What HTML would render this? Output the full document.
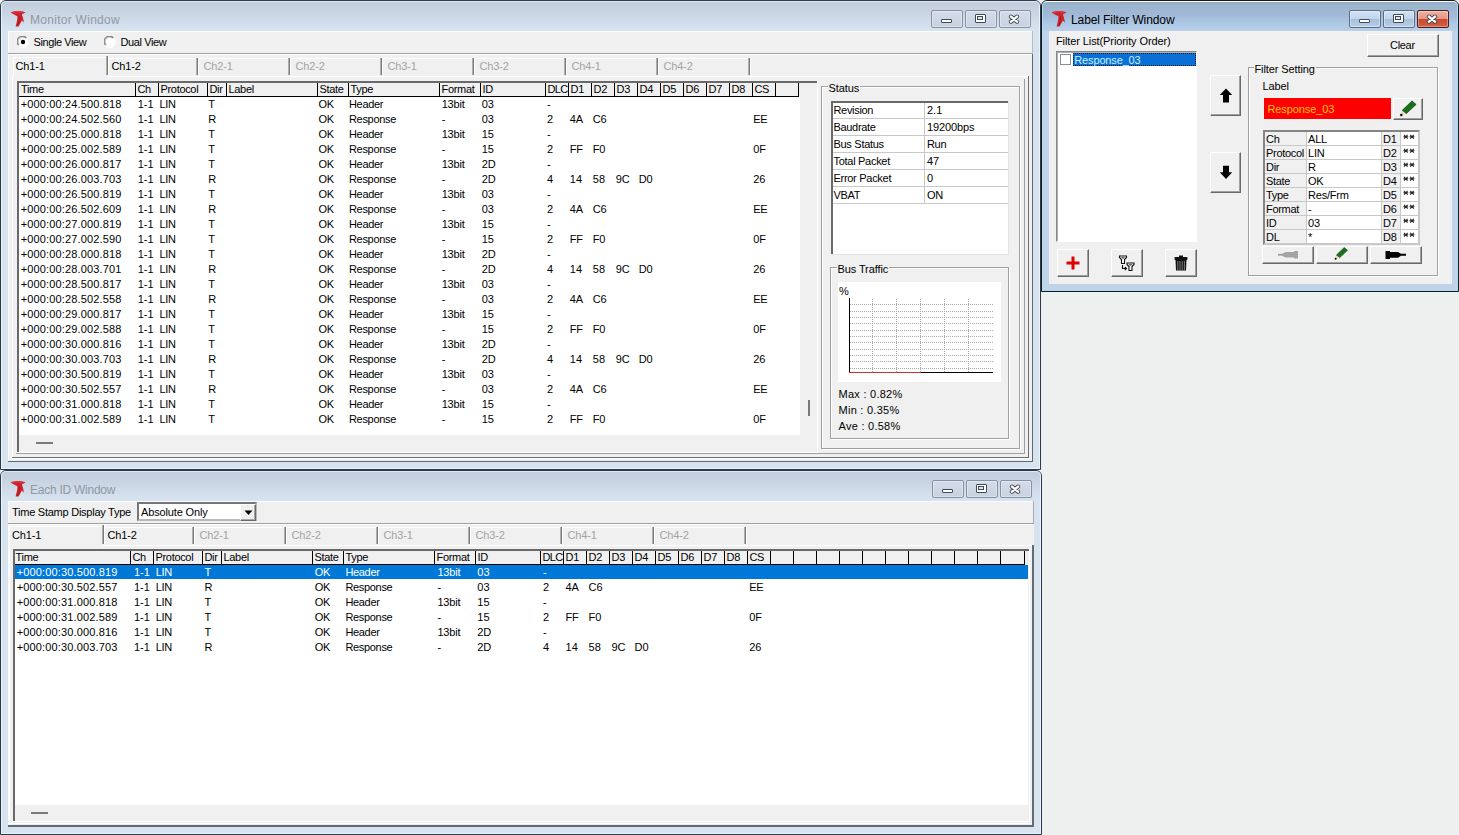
<!DOCTYPE html><html><head><meta charset="utf-8"><style>
html,body{margin:0;padding:0;width:1459px;height:835px;overflow:hidden;background:#eef0ef;font-family:"Liberation Sans",sans-serif;}
.a{position:absolute;box-sizing:content-box}
.t{position:absolute;white-space:pre;line-height:15px;font-size:11px;color:#000}
</style></head><body>
<div class="a" style="left:0px;top:0px;width:1039px;height:468px;border:1px solid #2e3947;border-radius:6px 6px 0 0;background:#d7e3ef;overflow:hidden"><div class="a" style="left:0;top:1px;width:100%;height:29px;background:linear-gradient(#c2cedc 0px,#c8d4e1 10px,#d3dfec 22px,#d8e3f0 29px)"></div><div class="a" style="left:0;top:0;width:1037px;height:466px;border:1px solid #e8f2fd;border-top-color:#dfe9f5;border-radius:5px 5px 0 0"></div></div>
<div class="a" style="left:10px;top:10px"><svg width="17" height="17" viewBox="0 0 17 17"><path d="M0.7 2.7 C2 1.6 4 0.9 6 0.9 L10.2 0.9 C12 1.1 14 1.7 15.6 2.4 C14 3.2 12.8 3.8 11.8 4.6 C12.6 6.5 13.6 9.5 13.9 12.8 C13.2 12 12.5 11.2 11.8 10.6 C11 12.2 10 14.2 8.6 16.6 L5.6 16.4 C6.6 12.6 7.6 9 7.4 6.2 C5.5 5.2 3.5 4.4 0.7 2.7 Z" fill="#cc2229"/><path d="M2.5 2.6 C5 1.8 9 1.6 13 2.4" stroke="#e8454c" stroke-width="0.9" fill="none"/><path d="M9.2 6 C10 9 9.5 12 7.5 15.5" stroke="#a8141c" stroke-width="0.8" fill="none"/></svg></div>
<div class="t" style="left:30px;top:13.0px;font-size:12px;color:#8f98a2;letter-spacing:0.28px">Monitor Window</div>
<div class="a" style="left:931px;top:10px;width:30px;height:16px;border:1px solid #8592a3;border-radius:2px;background:linear-gradient(#d3dce7,#c8d2df);box-shadow:inset 0 0 0 1px rgba(255,255,255,0.35)"></div>
<div class="a" style="left:941px;top:18.5px;width:9px;height:2.5px;border:1px solid #3f4a58;background:#fff;border-radius:1px"></div>
<div class="a" style="left:965px;top:10px;width:30px;height:16px;border:1px solid #8592a3;border-radius:2px;background:linear-gradient(#d3dce7,#c8d2df);box-shadow:inset 0 0 0 1px rgba(255,255,255,0.35)"></div>
<div class="a" style="left:975px;top:14px;width:9px;height:7px;border:1px solid #3f4a58;background:#fff;border-radius:1px"></div>
<div class="a" style="left:977px;top:16px;width:4px;height:2px;border:1px solid #3f4a58;background:#dfe6ee"></div>
<div class="a" style="left:999px;top:10px;width:30px;height:16px;border:1px solid #8592a3;border-radius:2px;background:linear-gradient(#d3dce7,#c8d2df);box-shadow:inset 0 0 0 1px rgba(255,255,255,0.35)"></div>
<svg class="a" style="left:1008px;top:14px" width="12" height="10" viewBox="0 0 12 10"><path d="M3 2.6 L9 7.6 M9 2.6 L3 7.6" stroke="#3c4550" stroke-width="4.2" stroke-linecap="round"/><path d="M3 2.6 L9 7.6 M9 2.6 L3 7.6" stroke="#fff" stroke-width="2.5" stroke-linecap="round"/></svg>
<div class="a" style="left:8px;top:31px;width:1024px;height:430px;background:#f0f0f0"></div>
<div class="a" style="left:8px;top:31px;width:1024px;height:1px;background:#fbfdff"></div>
<div class="a" style="left:8px;top:31px;width:1px;height:430px;background:#fbfbfd"></div>
<div class="a" style="left:1032px;top:31px;width:1px;height:23px;background:#b8bcc2"></div>
<div class="a" style="left:1032px;top:54px;width:1px;height:408px;background:#5d6875"></div>
<div class="a" style="left:8px;top:461px;width:1025px;height:1px;background:#5d6875"></div>
<div class="a" style="left:8px;top:53px;width:1024px;height:1px;background:#a0a0a0"></div>
<div class="a" style="left:8px;top:54px;width:1024px;height:1px;background:#ffffff"></div>
<svg class="a" style="left:16.5px;top:35.8px" width="12" height="12" viewBox="0 0 12 12"><circle cx="6" cy="6" r="4.6" fill="#fff"/><path d="M1.6 9.2 A5 5 0 0 1 9.4 1.8" stroke="#808080" stroke-width="1.1" fill="none"/><path d="M2.6 8.6 A4 4 0 0 1 8.8 2.6" stroke="#404040" stroke-width="0.7" fill="none" opacity="0.4"/><path d="M9.6 2.2 A5 5 0 0 1 2 10" stroke="#fff" stroke-width="1.1" fill="none"/><circle cx="6" cy="6" r="2.2" fill="#000"/></svg>
<div class="t" style="left:33.5px;top:34.5px;font-size:11px;letter-spacing:-0.4px">Single View</div>
<svg class="a" style="left:104px;top:35.8px" width="12" height="12" viewBox="0 0 12 12"><circle cx="6" cy="6" r="4.6" fill="#fff"/><path d="M1.6 9.2 A5 5 0 0 1 9.4 1.8" stroke="#808080" stroke-width="1.1" fill="none"/><path d="M2.6 8.6 A4 4 0 0 1 8.8 2.6" stroke="#404040" stroke-width="0.7" fill="none" opacity="0.4"/><path d="M9.6 2.2 A5 5 0 0 1 2 10" stroke="#fff" stroke-width="1.1" fill="none"/></svg>
<div class="t" style="left:120.5px;top:34.5px;font-size:11px;letter-spacing:-0.4px">Dual View</div>
<div class="a" style="left:107px;top:76px;width:921px;height:1px;background:#ffffff"></div>
<div class="a" style="left:108px;top:58px;width:641px;height:1px;background:#ffffff"></div>
<div class="a" style="left:107px;top:56px;width:1px;height:19px;background:#7a7a7a"></div>
<div class="a" style="left:108px;top:56px;width:1px;height:19px;background:#ffffff"></div>
<div class="a" style="left:106px;top:56px;width:1px;height:19px;background:#b0b0b0"></div>
<div class="a" style="left:197px;top:58px;width:1px;height:17px;background:#7a7a7a"></div>
<div class="a" style="left:198px;top:58px;width:1px;height:17px;background:#ffffff"></div>
<div class="a" style="left:196px;top:58px;width:1px;height:17px;background:#b0b0b0"></div>
<div class="a" style="left:289px;top:58px;width:1px;height:17px;background:#7a7a7a"></div>
<div class="a" style="left:290px;top:58px;width:1px;height:17px;background:#ffffff"></div>
<div class="a" style="left:288px;top:58px;width:1px;height:17px;background:#b0b0b0"></div>
<div class="a" style="left:381px;top:58px;width:1px;height:17px;background:#7a7a7a"></div>
<div class="a" style="left:382px;top:58px;width:1px;height:17px;background:#ffffff"></div>
<div class="a" style="left:380px;top:58px;width:1px;height:17px;background:#b0b0b0"></div>
<div class="a" style="left:473px;top:58px;width:1px;height:17px;background:#7a7a7a"></div>
<div class="a" style="left:474px;top:58px;width:1px;height:17px;background:#ffffff"></div>
<div class="a" style="left:472px;top:58px;width:1px;height:17px;background:#b0b0b0"></div>
<div class="a" style="left:565px;top:58px;width:1px;height:17px;background:#7a7a7a"></div>
<div class="a" style="left:566px;top:58px;width:1px;height:17px;background:#ffffff"></div>
<div class="a" style="left:564px;top:58px;width:1px;height:17px;background:#b0b0b0"></div>
<div class="a" style="left:657px;top:58px;width:1px;height:17px;background:#7a7a7a"></div>
<div class="a" style="left:658px;top:58px;width:1px;height:17px;background:#ffffff"></div>
<div class="a" style="left:656px;top:58px;width:1px;height:17px;background:#b0b0b0"></div>
<div class="a" style="left:749px;top:58px;width:1px;height:17px;background:#7a7a7a"></div>
<div class="a" style="left:750px;top:58px;width:1px;height:17px;background:#ffffff"></div>
<div class="a" style="left:748px;top:58px;width:1px;height:17px;background:#b0b0b0"></div>
<div class="a" style="left:13px;top:57px;width:1px;height:20px;background:#ffffff"></div>
<div class="a" style="left:13px;top:57px;width:93px;height:1px;background:#ffffff"></div>
<div class="t" style="left:15.5px;top:58.5px;font-size:11px;color:#000;letter-spacing:-0.13px">Ch1-1</div>
<div class="t" style="left:111.5px;top:58.5px;font-size:11px;color:#000;letter-spacing:-0.13px">Ch1-2</div>
<div class="t" style="left:203.5px;top:58.5px;font-size:11px;color:#a3a3a3;letter-spacing:-0.13px">Ch2-1</div>
<div class="t" style="left:295.5px;top:58.5px;font-size:11px;color:#a3a3a3;letter-spacing:-0.13px">Ch2-2</div>
<div class="t" style="left:387.5px;top:58.5px;font-size:11px;color:#a3a3a3;letter-spacing:-0.13px">Ch3-1</div>
<div class="t" style="left:479.5px;top:58.5px;font-size:11px;color:#a3a3a3;letter-spacing:-0.13px">Ch3-2</div>
<div class="t" style="left:571.5px;top:58.5px;font-size:11px;color:#a3a3a3;letter-spacing:-0.13px">Ch4-1</div>
<div class="t" style="left:663.5px;top:58.5px;font-size:11px;color:#a3a3a3;letter-spacing:-0.13px">Ch4-2</div>
<div class="a" style="left:12px;top:76px;width:1px;height:382px;background:#ffffff"></div>
<div class="a" style="left:1028px;top:76px;width:1px;height:382px;background:#6d6d6d"></div>
<div class="a" style="left:12px;top:457px;width:1017px;height:1px;background:#6d6d6d"></div>
<div class="a" style="left:12px;top:458px;width:1016px;height:1px;background:#ffffff"></div>
<div class="a" style="left:1024px;top:79px;width:1px;height:375px;background:#a0a0a0"></div>
<div class="a" style="left:16px;top:453px;width:1009px;height:1px;background:#a0a0a0"></div>
<div class="a" style="left:17px;top:81px;width:800px;height:371px;background:#f0f0f0"></div>
<div class="a" style="left:17px;top:81px;width:800px;height:2px;background:#696969"></div>
<div class="a" style="left:17px;top:81px;width:2px;height:371px;background:#696969"></div>
<div class="a" style="left:17px;top:452px;width:801px;height:1px;background:#ffffff"></div>
<div class="a" style="left:817px;top:81px;width:1px;height:372px;background:#ffffff"></div>
<div class="a" style="left:19px;top:83px;width:779px;height:13px;background:#f0f0f0"></div>
<div class="a" style="left:19px;top:96px;width:780px;height:1px;background:#000000"></div>
<div class="a" style="left:135px;top:83px;width:1px;height:14px;background:#000000"></div>
<div class="a" style="left:158px;top:83px;width:1px;height:14px;background:#000000"></div>
<div class="a" style="left:207px;top:83px;width:1px;height:14px;background:#000000"></div>
<div class="a" style="left:226px;top:83px;width:1px;height:14px;background:#000000"></div>
<div class="a" style="left:317px;top:83px;width:1px;height:14px;background:#000000"></div>
<div class="a" style="left:348px;top:83px;width:1px;height:14px;background:#000000"></div>
<div class="a" style="left:439px;top:83px;width:1px;height:14px;background:#000000"></div>
<div class="a" style="left:480px;top:83px;width:1px;height:14px;background:#000000"></div>
<div class="a" style="left:545px;top:83px;width:1px;height:14px;background:#000000"></div>
<div class="a" style="left:568px;top:83px;width:1px;height:14px;background:#000000"></div>
<div class="a" style="left:591px;top:83px;width:1px;height:14px;background:#000000"></div>
<div class="a" style="left:614px;top:83px;width:1px;height:14px;background:#000000"></div>
<div class="a" style="left:637px;top:83px;width:1px;height:14px;background:#000000"></div>
<div class="a" style="left:660px;top:83px;width:1px;height:14px;background:#000000"></div>
<div class="a" style="left:683px;top:83px;width:1px;height:14px;background:#000000"></div>
<div class="a" style="left:706px;top:83px;width:1px;height:14px;background:#000000"></div>
<div class="a" style="left:729px;top:83px;width:1px;height:14px;background:#000000"></div>
<div class="a" style="left:752px;top:83px;width:1px;height:14px;background:#000000"></div>
<div class="a" style="left:775px;top:83px;width:1px;height:14px;background:#000000"></div>
<div class="a" style="left:798px;top:83px;width:1px;height:14px;background:#000000"></div>
<div class="t" style="left:21px;top:81.5px;font-size:11px;;letter-spacing:-0.32px">Time</div>
<div class="t" style="left:137.5px;top:81.5px;font-size:11px;;letter-spacing:-0.32px">Ch</div>
<div class="t" style="left:160.5px;top:81.5px;font-size:11px;;letter-spacing:-0.32px">Protocol</div>
<div class="t" style="left:209.5px;top:81.5px;font-size:11px;;letter-spacing:-0.32px">Dir</div>
<div class="t" style="left:228.5px;top:81.5px;font-size:11px;;letter-spacing:-0.32px">Label</div>
<div class="t" style="left:319.5px;top:81.5px;font-size:11px;;letter-spacing:-0.32px">State</div>
<div class="t" style="left:350.5px;top:81.5px;font-size:11px;;letter-spacing:-0.32px">Type</div>
<div class="t" style="left:441.5px;top:81.5px;font-size:11px;;letter-spacing:-0.32px">Format</div>
<div class="t" style="left:482.5px;top:81.5px;font-size:11px;;letter-spacing:-0.32px">ID</div>
<div class="t" style="left:547.5px;top:81.5px;font-size:11px;letter-spacing:-0.6px">DLC</div>
<div class="t" style="left:570.5px;top:81.5px;font-size:11px;;letter-spacing:-0.16px">D1</div>
<div class="t" style="left:593.5px;top:81.5px;font-size:11px;;letter-spacing:-0.16px">D2</div>
<div class="t" style="left:616.5px;top:81.5px;font-size:11px;;letter-spacing:-0.16px">D3</div>
<div class="t" style="left:639.5px;top:81.5px;font-size:11px;;letter-spacing:-0.16px">D4</div>
<div class="t" style="left:662.5px;top:81.5px;font-size:11px;;letter-spacing:-0.16px">D5</div>
<div class="t" style="left:685.5px;top:81.5px;font-size:11px;;letter-spacing:-0.16px">D6</div>
<div class="t" style="left:708.5px;top:81.5px;font-size:11px;;letter-spacing:-0.16px">D7</div>
<div class="t" style="left:731.5px;top:81.5px;font-size:11px;;letter-spacing:-0.16px">D8</div>
<div class="t" style="left:754.5px;top:81.5px;font-size:11px;;letter-spacing:-0.32px">CS</div>
<div class="t" style="left:777.5px;top:81.5px;font-size:11px;"></div>
<div class="a" style="left:19px;top:97px;width:781px;height:338px;background:#ffffff"></div>
<div class="a" style="left:808px;top:400px;width:2px;height:16px;background:#7a7a7a"></div>
<div class="a" style="left:36px;top:442px;width:17px;height:2px;background:#7a7a7a"></div>
<div class="t" style="left:20.7px;top:96.5px;font-size:11px;color:#000;letter-spacing:0.15px">+000:00:24.500.818</div>
<div class="t" style="left:137.7px;top:96.5px;font-size:11px;color:#000">1-1</div>
<div class="t" style="left:159.4px;top:96.5px;font-size:11px;color:#000;letter-spacing:-0.32px">LIN</div>
<div class="t" style="left:208.2px;top:96.5px;font-size:11px;color:#000;letter-spacing:-0.32px">T</div>
<div class="t" style="left:318.6px;top:96.5px;font-size:11px;color:#000;letter-spacing:-0.32px">OK</div>
<div class="t" style="left:349.0px;top:96.5px;font-size:11px;color:#000;letter-spacing:-0.32px">Header</div>
<div class="t" style="left:441.7px;top:96.5px;font-size:11px;color:#000;letter-spacing:-0.19px">13bit</div>
<div class="t" style="left:481.7px;top:96.5px;font-size:11px;color:#000">03</div>
<div class="t" style="left:547.0px;top:96.5px;font-size:11px;color:#000">-</div>
<div class="t" style="left:20.7px;top:111.5px;font-size:11px;color:#000;letter-spacing:0.15px">+000:00:24.502.560</div>
<div class="t" style="left:137.7px;top:111.5px;font-size:11px;color:#000">1-1</div>
<div class="t" style="left:159.4px;top:111.5px;font-size:11px;color:#000;letter-spacing:-0.32px">LIN</div>
<div class="t" style="left:208.2px;top:111.5px;font-size:11px;color:#000;letter-spacing:-0.32px">R</div>
<div class="t" style="left:318.6px;top:111.5px;font-size:11px;color:#000;letter-spacing:-0.32px">OK</div>
<div class="t" style="left:349.0px;top:111.5px;font-size:11px;color:#000;letter-spacing:-0.32px">Response</div>
<div class="t" style="left:441.7px;top:111.5px;font-size:11px;color:#000">-</div>
<div class="t" style="left:481.7px;top:111.5px;font-size:11px;color:#000">03</div>
<div class="t" style="left:547.0px;top:111.5px;font-size:11px;color:#000">2</div>
<div class="t" style="left:569.8px;top:111.5px;font-size:11px;color:#000;letter-spacing:-0.16px">4A</div>
<div class="t" style="left:592.8px;top:111.5px;font-size:11px;color:#000;letter-spacing:-0.16px">C6</div>
<div class="t" style="left:753.2px;top:111.5px;font-size:11px;color:#000;letter-spacing:-0.32px">EE</div>
<div class="t" style="left:20.7px;top:126.5px;font-size:11px;color:#000;letter-spacing:0.15px">+000:00:25.000.818</div>
<div class="t" style="left:137.7px;top:126.5px;font-size:11px;color:#000">1-1</div>
<div class="t" style="left:159.4px;top:126.5px;font-size:11px;color:#000;letter-spacing:-0.32px">LIN</div>
<div class="t" style="left:208.2px;top:126.5px;font-size:11px;color:#000;letter-spacing:-0.32px">T</div>
<div class="t" style="left:318.6px;top:126.5px;font-size:11px;color:#000;letter-spacing:-0.32px">OK</div>
<div class="t" style="left:349.0px;top:126.5px;font-size:11px;color:#000;letter-spacing:-0.32px">Header</div>
<div class="t" style="left:441.7px;top:126.5px;font-size:11px;color:#000;letter-spacing:-0.19px">13bit</div>
<div class="t" style="left:481.7px;top:126.5px;font-size:11px;color:#000">15</div>
<div class="t" style="left:547.0px;top:126.5px;font-size:11px;color:#000">-</div>
<div class="t" style="left:20.7px;top:141.5px;font-size:11px;color:#000;letter-spacing:0.15px">+000:00:25.002.589</div>
<div class="t" style="left:137.7px;top:141.5px;font-size:11px;color:#000">1-1</div>
<div class="t" style="left:159.4px;top:141.5px;font-size:11px;color:#000;letter-spacing:-0.32px">LIN</div>
<div class="t" style="left:208.2px;top:141.5px;font-size:11px;color:#000;letter-spacing:-0.32px">T</div>
<div class="t" style="left:318.6px;top:141.5px;font-size:11px;color:#000;letter-spacing:-0.32px">OK</div>
<div class="t" style="left:349.0px;top:141.5px;font-size:11px;color:#000;letter-spacing:-0.32px">Response</div>
<div class="t" style="left:441.7px;top:141.5px;font-size:11px;color:#000">-</div>
<div class="t" style="left:481.7px;top:141.5px;font-size:11px;color:#000">15</div>
<div class="t" style="left:547.0px;top:141.5px;font-size:11px;color:#000">2</div>
<div class="t" style="left:569.8px;top:141.5px;font-size:11px;color:#000;letter-spacing:-0.32px">FF</div>
<div class="t" style="left:592.8px;top:141.5px;font-size:11px;color:#000;letter-spacing:-0.16px">F0</div>
<div class="t" style="left:753.2px;top:141.5px;font-size:11px;color:#000;letter-spacing:-0.16px">0F</div>
<div class="t" style="left:20.7px;top:156.5px;font-size:11px;color:#000;letter-spacing:0.15px">+000:00:26.000.817</div>
<div class="t" style="left:137.7px;top:156.5px;font-size:11px;color:#000">1-1</div>
<div class="t" style="left:159.4px;top:156.5px;font-size:11px;color:#000;letter-spacing:-0.32px">LIN</div>
<div class="t" style="left:208.2px;top:156.5px;font-size:11px;color:#000;letter-spacing:-0.32px">T</div>
<div class="t" style="left:318.6px;top:156.5px;font-size:11px;color:#000;letter-spacing:-0.32px">OK</div>
<div class="t" style="left:349.0px;top:156.5px;font-size:11px;color:#000;letter-spacing:-0.32px">Header</div>
<div class="t" style="left:441.7px;top:156.5px;font-size:11px;color:#000;letter-spacing:-0.19px">13bit</div>
<div class="t" style="left:481.7px;top:156.5px;font-size:11px;color:#000;letter-spacing:-0.16px">2D</div>
<div class="t" style="left:547.0px;top:156.5px;font-size:11px;color:#000">-</div>
<div class="t" style="left:20.7px;top:171.5px;font-size:11px;color:#000;letter-spacing:0.15px">+000:00:26.003.703</div>
<div class="t" style="left:137.7px;top:171.5px;font-size:11px;color:#000">1-1</div>
<div class="t" style="left:159.4px;top:171.5px;font-size:11px;color:#000;letter-spacing:-0.32px">LIN</div>
<div class="t" style="left:208.2px;top:171.5px;font-size:11px;color:#000;letter-spacing:-0.32px">R</div>
<div class="t" style="left:318.6px;top:171.5px;font-size:11px;color:#000;letter-spacing:-0.32px">OK</div>
<div class="t" style="left:349.0px;top:171.5px;font-size:11px;color:#000;letter-spacing:-0.32px">Response</div>
<div class="t" style="left:441.7px;top:171.5px;font-size:11px;color:#000">-</div>
<div class="t" style="left:481.7px;top:171.5px;font-size:11px;color:#000;letter-spacing:-0.16px">2D</div>
<div class="t" style="left:547.0px;top:171.5px;font-size:11px;color:#000">4</div>
<div class="t" style="left:569.8px;top:171.5px;font-size:11px;color:#000">14</div>
<div class="t" style="left:592.8px;top:171.5px;font-size:11px;color:#000">58</div>
<div class="t" style="left:615.8px;top:171.5px;font-size:11px;color:#000;letter-spacing:-0.16px">9C</div>
<div class="t" style="left:638.8px;top:171.5px;font-size:11px;color:#000;letter-spacing:-0.16px">D0</div>
<div class="t" style="left:753.2px;top:171.5px;font-size:11px;color:#000">26</div>
<div class="t" style="left:20.7px;top:186.5px;font-size:11px;color:#000;letter-spacing:0.15px">+000:00:26.500.819</div>
<div class="t" style="left:137.7px;top:186.5px;font-size:11px;color:#000">1-1</div>
<div class="t" style="left:159.4px;top:186.5px;font-size:11px;color:#000;letter-spacing:-0.32px">LIN</div>
<div class="t" style="left:208.2px;top:186.5px;font-size:11px;color:#000;letter-spacing:-0.32px">T</div>
<div class="t" style="left:318.6px;top:186.5px;font-size:11px;color:#000;letter-spacing:-0.32px">OK</div>
<div class="t" style="left:349.0px;top:186.5px;font-size:11px;color:#000;letter-spacing:-0.32px">Header</div>
<div class="t" style="left:441.7px;top:186.5px;font-size:11px;color:#000;letter-spacing:-0.19px">13bit</div>
<div class="t" style="left:481.7px;top:186.5px;font-size:11px;color:#000">03</div>
<div class="t" style="left:547.0px;top:186.5px;font-size:11px;color:#000">-</div>
<div class="t" style="left:20.7px;top:201.5px;font-size:11px;color:#000;letter-spacing:0.15px">+000:00:26.502.609</div>
<div class="t" style="left:137.7px;top:201.5px;font-size:11px;color:#000">1-1</div>
<div class="t" style="left:159.4px;top:201.5px;font-size:11px;color:#000;letter-spacing:-0.32px">LIN</div>
<div class="t" style="left:208.2px;top:201.5px;font-size:11px;color:#000;letter-spacing:-0.32px">R</div>
<div class="t" style="left:318.6px;top:201.5px;font-size:11px;color:#000;letter-spacing:-0.32px">OK</div>
<div class="t" style="left:349.0px;top:201.5px;font-size:11px;color:#000;letter-spacing:-0.32px">Response</div>
<div class="t" style="left:441.7px;top:201.5px;font-size:11px;color:#000">-</div>
<div class="t" style="left:481.7px;top:201.5px;font-size:11px;color:#000">03</div>
<div class="t" style="left:547.0px;top:201.5px;font-size:11px;color:#000">2</div>
<div class="t" style="left:569.8px;top:201.5px;font-size:11px;color:#000;letter-spacing:-0.16px">4A</div>
<div class="t" style="left:592.8px;top:201.5px;font-size:11px;color:#000;letter-spacing:-0.16px">C6</div>
<div class="t" style="left:753.2px;top:201.5px;font-size:11px;color:#000;letter-spacing:-0.32px">EE</div>
<div class="t" style="left:20.7px;top:216.5px;font-size:11px;color:#000;letter-spacing:0.15px">+000:00:27.000.819</div>
<div class="t" style="left:137.7px;top:216.5px;font-size:11px;color:#000">1-1</div>
<div class="t" style="left:159.4px;top:216.5px;font-size:11px;color:#000;letter-spacing:-0.32px">LIN</div>
<div class="t" style="left:208.2px;top:216.5px;font-size:11px;color:#000;letter-spacing:-0.32px">T</div>
<div class="t" style="left:318.6px;top:216.5px;font-size:11px;color:#000;letter-spacing:-0.32px">OK</div>
<div class="t" style="left:349.0px;top:216.5px;font-size:11px;color:#000;letter-spacing:-0.32px">Header</div>
<div class="t" style="left:441.7px;top:216.5px;font-size:11px;color:#000;letter-spacing:-0.19px">13bit</div>
<div class="t" style="left:481.7px;top:216.5px;font-size:11px;color:#000">15</div>
<div class="t" style="left:547.0px;top:216.5px;font-size:11px;color:#000">-</div>
<div class="t" style="left:20.7px;top:231.5px;font-size:11px;color:#000;letter-spacing:0.15px">+000:00:27.002.590</div>
<div class="t" style="left:137.7px;top:231.5px;font-size:11px;color:#000">1-1</div>
<div class="t" style="left:159.4px;top:231.5px;font-size:11px;color:#000;letter-spacing:-0.32px">LIN</div>
<div class="t" style="left:208.2px;top:231.5px;font-size:11px;color:#000;letter-spacing:-0.32px">T</div>
<div class="t" style="left:318.6px;top:231.5px;font-size:11px;color:#000;letter-spacing:-0.32px">OK</div>
<div class="t" style="left:349.0px;top:231.5px;font-size:11px;color:#000;letter-spacing:-0.32px">Response</div>
<div class="t" style="left:441.7px;top:231.5px;font-size:11px;color:#000">-</div>
<div class="t" style="left:481.7px;top:231.5px;font-size:11px;color:#000">15</div>
<div class="t" style="left:547.0px;top:231.5px;font-size:11px;color:#000">2</div>
<div class="t" style="left:569.8px;top:231.5px;font-size:11px;color:#000;letter-spacing:-0.32px">FF</div>
<div class="t" style="left:592.8px;top:231.5px;font-size:11px;color:#000;letter-spacing:-0.16px">F0</div>
<div class="t" style="left:753.2px;top:231.5px;font-size:11px;color:#000;letter-spacing:-0.16px">0F</div>
<div class="t" style="left:20.7px;top:246.5px;font-size:11px;color:#000;letter-spacing:0.15px">+000:00:28.000.818</div>
<div class="t" style="left:137.7px;top:246.5px;font-size:11px;color:#000">1-1</div>
<div class="t" style="left:159.4px;top:246.5px;font-size:11px;color:#000;letter-spacing:-0.32px">LIN</div>
<div class="t" style="left:208.2px;top:246.5px;font-size:11px;color:#000;letter-spacing:-0.32px">T</div>
<div class="t" style="left:318.6px;top:246.5px;font-size:11px;color:#000;letter-spacing:-0.32px">OK</div>
<div class="t" style="left:349.0px;top:246.5px;font-size:11px;color:#000;letter-spacing:-0.32px">Header</div>
<div class="t" style="left:441.7px;top:246.5px;font-size:11px;color:#000;letter-spacing:-0.19px">13bit</div>
<div class="t" style="left:481.7px;top:246.5px;font-size:11px;color:#000;letter-spacing:-0.16px">2D</div>
<div class="t" style="left:547.0px;top:246.5px;font-size:11px;color:#000">-</div>
<div class="t" style="left:20.7px;top:261.5px;font-size:11px;color:#000;letter-spacing:0.15px">+000:00:28.003.701</div>
<div class="t" style="left:137.7px;top:261.5px;font-size:11px;color:#000">1-1</div>
<div class="t" style="left:159.4px;top:261.5px;font-size:11px;color:#000;letter-spacing:-0.32px">LIN</div>
<div class="t" style="left:208.2px;top:261.5px;font-size:11px;color:#000;letter-spacing:-0.32px">R</div>
<div class="t" style="left:318.6px;top:261.5px;font-size:11px;color:#000;letter-spacing:-0.32px">OK</div>
<div class="t" style="left:349.0px;top:261.5px;font-size:11px;color:#000;letter-spacing:-0.32px">Response</div>
<div class="t" style="left:441.7px;top:261.5px;font-size:11px;color:#000">-</div>
<div class="t" style="left:481.7px;top:261.5px;font-size:11px;color:#000;letter-spacing:-0.16px">2D</div>
<div class="t" style="left:547.0px;top:261.5px;font-size:11px;color:#000">4</div>
<div class="t" style="left:569.8px;top:261.5px;font-size:11px;color:#000">14</div>
<div class="t" style="left:592.8px;top:261.5px;font-size:11px;color:#000">58</div>
<div class="t" style="left:615.8px;top:261.5px;font-size:11px;color:#000;letter-spacing:-0.16px">9C</div>
<div class="t" style="left:638.8px;top:261.5px;font-size:11px;color:#000;letter-spacing:-0.16px">D0</div>
<div class="t" style="left:753.2px;top:261.5px;font-size:11px;color:#000">26</div>
<div class="t" style="left:20.7px;top:276.5px;font-size:11px;color:#000;letter-spacing:0.15px">+000:00:28.500.817</div>
<div class="t" style="left:137.7px;top:276.5px;font-size:11px;color:#000">1-1</div>
<div class="t" style="left:159.4px;top:276.5px;font-size:11px;color:#000;letter-spacing:-0.32px">LIN</div>
<div class="t" style="left:208.2px;top:276.5px;font-size:11px;color:#000;letter-spacing:-0.32px">T</div>
<div class="t" style="left:318.6px;top:276.5px;font-size:11px;color:#000;letter-spacing:-0.32px">OK</div>
<div class="t" style="left:349.0px;top:276.5px;font-size:11px;color:#000;letter-spacing:-0.32px">Header</div>
<div class="t" style="left:441.7px;top:276.5px;font-size:11px;color:#000;letter-spacing:-0.19px">13bit</div>
<div class="t" style="left:481.7px;top:276.5px;font-size:11px;color:#000">03</div>
<div class="t" style="left:547.0px;top:276.5px;font-size:11px;color:#000">-</div>
<div class="t" style="left:20.7px;top:291.5px;font-size:11px;color:#000;letter-spacing:0.15px">+000:00:28.502.558</div>
<div class="t" style="left:137.7px;top:291.5px;font-size:11px;color:#000">1-1</div>
<div class="t" style="left:159.4px;top:291.5px;font-size:11px;color:#000;letter-spacing:-0.32px">LIN</div>
<div class="t" style="left:208.2px;top:291.5px;font-size:11px;color:#000;letter-spacing:-0.32px">R</div>
<div class="t" style="left:318.6px;top:291.5px;font-size:11px;color:#000;letter-spacing:-0.32px">OK</div>
<div class="t" style="left:349.0px;top:291.5px;font-size:11px;color:#000;letter-spacing:-0.32px">Response</div>
<div class="t" style="left:441.7px;top:291.5px;font-size:11px;color:#000">-</div>
<div class="t" style="left:481.7px;top:291.5px;font-size:11px;color:#000">03</div>
<div class="t" style="left:547.0px;top:291.5px;font-size:11px;color:#000">2</div>
<div class="t" style="left:569.8px;top:291.5px;font-size:11px;color:#000;letter-spacing:-0.16px">4A</div>
<div class="t" style="left:592.8px;top:291.5px;font-size:11px;color:#000;letter-spacing:-0.16px">C6</div>
<div class="t" style="left:753.2px;top:291.5px;font-size:11px;color:#000;letter-spacing:-0.32px">EE</div>
<div class="t" style="left:20.7px;top:306.5px;font-size:11px;color:#000;letter-spacing:0.15px">+000:00:29.000.817</div>
<div class="t" style="left:137.7px;top:306.5px;font-size:11px;color:#000">1-1</div>
<div class="t" style="left:159.4px;top:306.5px;font-size:11px;color:#000;letter-spacing:-0.32px">LIN</div>
<div class="t" style="left:208.2px;top:306.5px;font-size:11px;color:#000;letter-spacing:-0.32px">T</div>
<div class="t" style="left:318.6px;top:306.5px;font-size:11px;color:#000;letter-spacing:-0.32px">OK</div>
<div class="t" style="left:349.0px;top:306.5px;font-size:11px;color:#000;letter-spacing:-0.32px">Header</div>
<div class="t" style="left:441.7px;top:306.5px;font-size:11px;color:#000;letter-spacing:-0.19px">13bit</div>
<div class="t" style="left:481.7px;top:306.5px;font-size:11px;color:#000">15</div>
<div class="t" style="left:547.0px;top:306.5px;font-size:11px;color:#000">-</div>
<div class="t" style="left:20.7px;top:321.5px;font-size:11px;color:#000;letter-spacing:0.15px">+000:00:29.002.588</div>
<div class="t" style="left:137.7px;top:321.5px;font-size:11px;color:#000">1-1</div>
<div class="t" style="left:159.4px;top:321.5px;font-size:11px;color:#000;letter-spacing:-0.32px">LIN</div>
<div class="t" style="left:208.2px;top:321.5px;font-size:11px;color:#000;letter-spacing:-0.32px">T</div>
<div class="t" style="left:318.6px;top:321.5px;font-size:11px;color:#000;letter-spacing:-0.32px">OK</div>
<div class="t" style="left:349.0px;top:321.5px;font-size:11px;color:#000;letter-spacing:-0.32px">Response</div>
<div class="t" style="left:441.7px;top:321.5px;font-size:11px;color:#000">-</div>
<div class="t" style="left:481.7px;top:321.5px;font-size:11px;color:#000">15</div>
<div class="t" style="left:547.0px;top:321.5px;font-size:11px;color:#000">2</div>
<div class="t" style="left:569.8px;top:321.5px;font-size:11px;color:#000;letter-spacing:-0.32px">FF</div>
<div class="t" style="left:592.8px;top:321.5px;font-size:11px;color:#000;letter-spacing:-0.16px">F0</div>
<div class="t" style="left:753.2px;top:321.5px;font-size:11px;color:#000;letter-spacing:-0.16px">0F</div>
<div class="t" style="left:20.7px;top:336.5px;font-size:11px;color:#000;letter-spacing:0.15px">+000:00:30.000.816</div>
<div class="t" style="left:137.7px;top:336.5px;font-size:11px;color:#000">1-1</div>
<div class="t" style="left:159.4px;top:336.5px;font-size:11px;color:#000;letter-spacing:-0.32px">LIN</div>
<div class="t" style="left:208.2px;top:336.5px;font-size:11px;color:#000;letter-spacing:-0.32px">T</div>
<div class="t" style="left:318.6px;top:336.5px;font-size:11px;color:#000;letter-spacing:-0.32px">OK</div>
<div class="t" style="left:349.0px;top:336.5px;font-size:11px;color:#000;letter-spacing:-0.32px">Header</div>
<div class="t" style="left:441.7px;top:336.5px;font-size:11px;color:#000;letter-spacing:-0.19px">13bit</div>
<div class="t" style="left:481.7px;top:336.5px;font-size:11px;color:#000;letter-spacing:-0.16px">2D</div>
<div class="t" style="left:547.0px;top:336.5px;font-size:11px;color:#000">-</div>
<div class="t" style="left:20.7px;top:351.5px;font-size:11px;color:#000;letter-spacing:0.15px">+000:00:30.003.703</div>
<div class="t" style="left:137.7px;top:351.5px;font-size:11px;color:#000">1-1</div>
<div class="t" style="left:159.4px;top:351.5px;font-size:11px;color:#000;letter-spacing:-0.32px">LIN</div>
<div class="t" style="left:208.2px;top:351.5px;font-size:11px;color:#000;letter-spacing:-0.32px">R</div>
<div class="t" style="left:318.6px;top:351.5px;font-size:11px;color:#000;letter-spacing:-0.32px">OK</div>
<div class="t" style="left:349.0px;top:351.5px;font-size:11px;color:#000;letter-spacing:-0.32px">Response</div>
<div class="t" style="left:441.7px;top:351.5px;font-size:11px;color:#000">-</div>
<div class="t" style="left:481.7px;top:351.5px;font-size:11px;color:#000;letter-spacing:-0.16px">2D</div>
<div class="t" style="left:547.0px;top:351.5px;font-size:11px;color:#000">4</div>
<div class="t" style="left:569.8px;top:351.5px;font-size:11px;color:#000">14</div>
<div class="t" style="left:592.8px;top:351.5px;font-size:11px;color:#000">58</div>
<div class="t" style="left:615.8px;top:351.5px;font-size:11px;color:#000;letter-spacing:-0.16px">9C</div>
<div class="t" style="left:638.8px;top:351.5px;font-size:11px;color:#000;letter-spacing:-0.16px">D0</div>
<div class="t" style="left:753.2px;top:351.5px;font-size:11px;color:#000">26</div>
<div class="t" style="left:20.7px;top:366.5px;font-size:11px;color:#000;letter-spacing:0.15px">+000:00:30.500.819</div>
<div class="t" style="left:137.7px;top:366.5px;font-size:11px;color:#000">1-1</div>
<div class="t" style="left:159.4px;top:366.5px;font-size:11px;color:#000;letter-spacing:-0.32px">LIN</div>
<div class="t" style="left:208.2px;top:366.5px;font-size:11px;color:#000;letter-spacing:-0.32px">T</div>
<div class="t" style="left:318.6px;top:366.5px;font-size:11px;color:#000;letter-spacing:-0.32px">OK</div>
<div class="t" style="left:349.0px;top:366.5px;font-size:11px;color:#000;letter-spacing:-0.32px">Header</div>
<div class="t" style="left:441.7px;top:366.5px;font-size:11px;color:#000;letter-spacing:-0.19px">13bit</div>
<div class="t" style="left:481.7px;top:366.5px;font-size:11px;color:#000">03</div>
<div class="t" style="left:547.0px;top:366.5px;font-size:11px;color:#000">-</div>
<div class="t" style="left:20.7px;top:381.5px;font-size:11px;color:#000;letter-spacing:0.15px">+000:00:30.502.557</div>
<div class="t" style="left:137.7px;top:381.5px;font-size:11px;color:#000">1-1</div>
<div class="t" style="left:159.4px;top:381.5px;font-size:11px;color:#000;letter-spacing:-0.32px">LIN</div>
<div class="t" style="left:208.2px;top:381.5px;font-size:11px;color:#000;letter-spacing:-0.32px">R</div>
<div class="t" style="left:318.6px;top:381.5px;font-size:11px;color:#000;letter-spacing:-0.32px">OK</div>
<div class="t" style="left:349.0px;top:381.5px;font-size:11px;color:#000;letter-spacing:-0.32px">Response</div>
<div class="t" style="left:441.7px;top:381.5px;font-size:11px;color:#000">-</div>
<div class="t" style="left:481.7px;top:381.5px;font-size:11px;color:#000">03</div>
<div class="t" style="left:547.0px;top:381.5px;font-size:11px;color:#000">2</div>
<div class="t" style="left:569.8px;top:381.5px;font-size:11px;color:#000;letter-spacing:-0.16px">4A</div>
<div class="t" style="left:592.8px;top:381.5px;font-size:11px;color:#000;letter-spacing:-0.16px">C6</div>
<div class="t" style="left:753.2px;top:381.5px;font-size:11px;color:#000;letter-spacing:-0.32px">EE</div>
<div class="t" style="left:20.7px;top:396.5px;font-size:11px;color:#000;letter-spacing:0.15px">+000:00:31.000.818</div>
<div class="t" style="left:137.7px;top:396.5px;font-size:11px;color:#000">1-1</div>
<div class="t" style="left:159.4px;top:396.5px;font-size:11px;color:#000;letter-spacing:-0.32px">LIN</div>
<div class="t" style="left:208.2px;top:396.5px;font-size:11px;color:#000;letter-spacing:-0.32px">T</div>
<div class="t" style="left:318.6px;top:396.5px;font-size:11px;color:#000;letter-spacing:-0.32px">OK</div>
<div class="t" style="left:349.0px;top:396.5px;font-size:11px;color:#000;letter-spacing:-0.32px">Header</div>
<div class="t" style="left:441.7px;top:396.5px;font-size:11px;color:#000;letter-spacing:-0.19px">13bit</div>
<div class="t" style="left:481.7px;top:396.5px;font-size:11px;color:#000">15</div>
<div class="t" style="left:547.0px;top:396.5px;font-size:11px;color:#000">-</div>
<div class="t" style="left:20.7px;top:411.5px;font-size:11px;color:#000;letter-spacing:0.15px">+000:00:31.002.589</div>
<div class="t" style="left:137.7px;top:411.5px;font-size:11px;color:#000">1-1</div>
<div class="t" style="left:159.4px;top:411.5px;font-size:11px;color:#000;letter-spacing:-0.32px">LIN</div>
<div class="t" style="left:208.2px;top:411.5px;font-size:11px;color:#000;letter-spacing:-0.32px">T</div>
<div class="t" style="left:318.6px;top:411.5px;font-size:11px;color:#000;letter-spacing:-0.32px">OK</div>
<div class="t" style="left:349.0px;top:411.5px;font-size:11px;color:#000;letter-spacing:-0.32px">Response</div>
<div class="t" style="left:441.7px;top:411.5px;font-size:11px;color:#000">-</div>
<div class="t" style="left:481.7px;top:411.5px;font-size:11px;color:#000">15</div>
<div class="t" style="left:547.0px;top:411.5px;font-size:11px;color:#000">2</div>
<div class="t" style="left:569.8px;top:411.5px;font-size:11px;color:#000;letter-spacing:-0.32px">FF</div>
<div class="t" style="left:592.8px;top:411.5px;font-size:11px;color:#000;letter-spacing:-0.16px">F0</div>
<div class="t" style="left:753.2px;top:411.5px;font-size:11px;color:#000;letter-spacing:-0.16px">0F</div>
<div class="a" style="left:821px;top:86px;width:197px;height:361px;border:1px solid #a0a0a0;box-shadow:1px 1px 0 #fff, inset 1px 1px 0 #fff"></div>
<div class="t" style="left:827.5px;top:80.5px;padding:0 1px;background:#f0f0f0;letter-spacing:-0.1px">Status</div>
<div class="a" style="left:831px;top:101px;width:177px;height:153px;background:#fff"></div>
<div class="a" style="left:831px;top:101px;width:178px;height:2px;background:#696969"></div>
<div class="a" style="left:831px;top:101px;width:2px;height:154px;background:#696969"></div>
<div class="a" style="left:831px;top:254px;width:178px;height:1px;background:#e4e4e4"></div>
<div class="a" style="left:1008px;top:101px;width:1px;height:154px;background:#e4e4e4"></div>
<div class="a" style="left:833px;top:118px;width:175px;height:1px;background:#c8c8c8"></div>
<div class="t" style="left:833.5px;top:103.0px;font-size:11px;;letter-spacing:-0.32px">Revision</div>
<div class="t" style="left:927px;top:103.0px;font-size:11px;">2.1</div>
<div class="a" style="left:833px;top:135px;width:175px;height:1px;background:#c8c8c8"></div>
<div class="t" style="left:833.5px;top:120.0px;font-size:11px;;letter-spacing:-0.32px">Baudrate</div>
<div class="t" style="left:927px;top:120.0px;font-size:11px;;letter-spacing:-0.12px">19200bps</div>
<div class="a" style="left:833px;top:152px;width:175px;height:1px;background:#c8c8c8"></div>
<div class="t" style="left:833.5px;top:137.0px;font-size:11px;;letter-spacing:-0.29px">Bus Status</div>
<div class="t" style="left:927px;top:137.0px;font-size:11px;;letter-spacing:-0.32px">Run</div>
<div class="a" style="left:833px;top:169px;width:175px;height:1px;background:#c8c8c8"></div>
<div class="t" style="left:833.5px;top:154.0px;font-size:11px;;letter-spacing:-0.29px">Total Packet</div>
<div class="t" style="left:927px;top:154.0px;font-size:11px;">47</div>
<div class="a" style="left:833px;top:186px;width:175px;height:1px;background:#c8c8c8"></div>
<div class="t" style="left:833.5px;top:171.0px;font-size:11px;;letter-spacing:-0.29px">Error Packet</div>
<div class="t" style="left:927px;top:171.0px;font-size:11px;">0</div>
<div class="a" style="left:833px;top:203px;width:175px;height:1px;background:#c8c8c8"></div>
<div class="t" style="left:833.5px;top:188.0px;font-size:11px;;letter-spacing:-0.32px">VBAT</div>
<div class="t" style="left:927px;top:188.0px;font-size:11px;;letter-spacing:-0.32px">ON</div>
<div class="a" style="left:924px;top:103px;width:1px;height:101px;background:#c8c8c8"></div>
<div class="a" style="left:830px;top:267px;width:177px;height:170px;border:1px solid #a0a0a0;box-shadow:1px 1px 0 #fff, inset 1px 1px 0 #fff"></div>
<div class="t" style="left:836.5px;top:261.5px;padding:0 1px;background:#f0f0f0;letter-spacing:-0.1px">Bus Traffic</div>
<div class="a" style="left:838px;top:282px;width:163px;height:100px;background:#fff"></div>
<div class="t" style="left:839px;top:283.5px;font-size:11px;">%</div>
<svg class="a" style="left:838px;top:282px" width="163" height="100"><line x1="34.5" y1="17" x2="34.5" y2="90" stroke="#a8a8a8" stroke-dasharray="1,1"/><line x1="58.5" y1="17" x2="58.5" y2="90" stroke="#a8a8a8" stroke-dasharray="1,1"/><line x1="82.5" y1="17" x2="82.5" y2="90" stroke="#a8a8a8" stroke-dasharray="1,1"/><line x1="106.5" y1="17" x2="106.5" y2="90" stroke="#a8a8a8" stroke-dasharray="1,1"/><line x1="130.5" y1="17" x2="130.5" y2="90" stroke="#a8a8a8" stroke-dasharray="1,1"/><line x1="12" y1="22.5" x2="155" y2="22.5" stroke="#a8a8a8" stroke-dasharray="1,1"/><line x1="12" y1="29.5" x2="155" y2="29.5" stroke="#a8a8a8" stroke-dasharray="1,1"/><line x1="12" y1="35.5" x2="155" y2="35.5" stroke="#a8a8a8" stroke-dasharray="1,1"/><line x1="12" y1="41.5" x2="155" y2="41.5" stroke="#a8a8a8" stroke-dasharray="1,1"/><line x1="12" y1="48.5" x2="155" y2="48.5" stroke="#a8a8a8" stroke-dasharray="1,1"/><line x1="12" y1="54.5" x2="155" y2="54.5" stroke="#a8a8a8" stroke-dasharray="1,1"/><line x1="12" y1="60.5" x2="155" y2="60.5" stroke="#a8a8a8" stroke-dasharray="1,1"/><line x1="12" y1="67.5" x2="155" y2="67.5" stroke="#a8a8a8" stroke-dasharray="1,1"/><line x1="12" y1="73.5" x2="155" y2="73.5" stroke="#a8a8a8" stroke-dasharray="1,1"/><line x1="12" y1="79.5" x2="155" y2="79.5" stroke="#a8a8a8" stroke-dasharray="1,1"/><line x1="12" y1="86.5" x2="155" y2="86.5" stroke="#a8a8a8" stroke-dasharray="1,1"/><line x1="11.5" y1="16" x2="11.5" y2="90.5" stroke="#000" stroke-width="1"/><line x1="11" y1="90.5" x2="155" y2="90.5" stroke="#000" stroke-width="1"/><line x1="11" y1="90.5" x2="83" y2="90.5" stroke="#c83232" stroke-width="1"/></svg>
<div class="t" style="left:838.6px;top:386.9px;font-size:11px;letter-spacing:0.25px">Max : 0.82%</div>
<div class="t" style="left:838.6px;top:402.9px;font-size:11px;letter-spacing:0.25px">Min : 0.35%</div>
<div class="t" style="left:838.6px;top:419.1px;font-size:11px;letter-spacing:0.25px">Ave : 0.58%</div>
<div class="a" style="left:0px;top:470px;width:1040px;height:363px;border:1px solid #2e3947;border-radius:6px 6px 0 0;background:#d7e3ef;overflow:hidden"><div class="a" style="left:0;top:1px;width:100%;height:29px;background:linear-gradient(#c2cedc 0px,#c8d4e1 10px,#d3dfec 22px,#d8e3f0 29px)"></div><div class="a" style="left:0;top:0;width:1038px;height:361px;border:1px solid #e8f2fd;border-top-color:#dfe9f5;border-radius:5px 5px 0 0"></div></div>
<div class="a" style="left:10px;top:480px"><svg width="17" height="17" viewBox="0 0 17 17"><path d="M0.7 2.7 C2 1.6 4 0.9 6 0.9 L10.2 0.9 C12 1.1 14 1.7 15.6 2.4 C14 3.2 12.8 3.8 11.8 4.6 C12.6 6.5 13.6 9.5 13.9 12.8 C13.2 12 12.5 11.2 11.8 10.6 C11 12.2 10 14.2 8.6 16.6 L5.6 16.4 C6.6 12.6 7.6 9 7.4 6.2 C5.5 5.2 3.5 4.4 0.7 2.7 Z" fill="#cc2229"/><path d="M2.5 2.6 C5 1.8 9 1.6 13 2.4" stroke="#e8454c" stroke-width="0.9" fill="none"/><path d="M9.2 6 C10 9 9.5 12 7.5 15.5" stroke="#a8141c" stroke-width="0.8" fill="none"/></svg></div>
<div class="t" style="left:30px;top:483.0px;font-size:12px;color:#8f98a2;letter-spacing:-0.25px">Each ID Window</div>
<div class="a" style="left:932px;top:480px;width:30px;height:16px;border:1px solid #8592a3;border-radius:2px;background:linear-gradient(#d3dce7,#c8d2df);box-shadow:inset 0 0 0 1px rgba(255,255,255,0.35)"></div>
<div class="a" style="left:942px;top:488.5px;width:9px;height:2.5px;border:1px solid #3f4a58;background:#fff;border-radius:1px"></div>
<div class="a" style="left:966px;top:480px;width:30px;height:16px;border:1px solid #8592a3;border-radius:2px;background:linear-gradient(#d3dce7,#c8d2df);box-shadow:inset 0 0 0 1px rgba(255,255,255,0.35)"></div>
<div class="a" style="left:976px;top:484px;width:9px;height:7px;border:1px solid #3f4a58;background:#fff;border-radius:1px"></div>
<div class="a" style="left:978px;top:486px;width:4px;height:2px;border:1px solid #3f4a58;background:#dfe6ee"></div>
<div class="a" style="left:1000px;top:480px;width:30px;height:16px;border:1px solid #8592a3;border-radius:2px;background:linear-gradient(#d3dce7,#c8d2df);box-shadow:inset 0 0 0 1px rgba(255,255,255,0.35)"></div>
<svg class="a" style="left:1009px;top:484px" width="12" height="10" viewBox="0 0 12 10"><path d="M3 2.6 L9 7.6 M9 2.6 L3 7.6" stroke="#3c4550" stroke-width="4.2" stroke-linecap="round"/><path d="M3 2.6 L9 7.6 M9 2.6 L3 7.6" stroke="#fff" stroke-width="2.5" stroke-linecap="round"/></svg>
<div class="a" style="left:8px;top:501px;width:1026px;height:326px;background:#f0f0f0"></div>
<div class="a" style="left:8px;top:501px;width:1026px;height:1px;background:#fbfdff"></div>
<div class="a" style="left:8px;top:501px;width:1px;height:325px;background:#fbfbfd"></div>
<div class="a" style="left:1033px;top:501px;width:1px;height:23px;background:#a8acb2"></div>
<div class="a" style="left:1032px;top:545px;width:2px;height:282px;background:#646b73"></div>
<div class="a" style="left:8px;top:825px;width:1026px;height:2px;background:#646b73"></div>
<div class="t" style="left:12px;top:505.0px;font-size:11px;letter-spacing:-0.25px">Time Stamp Display Type</div>
<div class="a" style="left:137px;top:502px;width:116px;height:15px;border:2px solid;border-color:#767676 #b8b8b8 #b8b8b8 #767676;background:#fff"></div>
<div class="t" style="left:141px;top:505.0px;font-size:11px;letter-spacing:-0.15px">Absolute Only</div>
<div class="a" style="left:240px;top:504px;width:14px;height:15px;border:1px solid;border-color:#fff #6a6a6a #6a6a6a #fff;background:#f0f0f0;box-shadow:inset -1px -1px 0 #a8a8a8"></div>
<svg class="a" style="left:244px;top:510px" width="9" height="6"><path d="M0.5 0.5 H8.5 L4.5 5 Z" fill="#000"/></svg>
<div class="a" style="left:8px;top:523px;width:1026px;height:1px;background:#a0a0a0"></div>
<div class="a" style="left:8px;top:524px;width:1026px;height:1px;background:#ffffff"></div>
<div class="a" style="left:103px;top:545px;width:929px;height:1px;background:#ffffff"></div>
<div class="a" style="left:104px;top:527px;width:641px;height:1px;background:#ffffff"></div>
<div class="a" style="left:103px;top:525px;width:1px;height:19px;background:#7a7a7a"></div>
<div class="a" style="left:104px;top:525px;width:1px;height:19px;background:#ffffff"></div>
<div class="a" style="left:102px;top:525px;width:1px;height:19px;background:#b0b0b0"></div>
<div class="a" style="left:193px;top:527px;width:1px;height:17px;background:#7a7a7a"></div>
<div class="a" style="left:194px;top:527px;width:1px;height:17px;background:#ffffff"></div>
<div class="a" style="left:192px;top:527px;width:1px;height:17px;background:#b0b0b0"></div>
<div class="a" style="left:285px;top:527px;width:1px;height:17px;background:#7a7a7a"></div>
<div class="a" style="left:286px;top:527px;width:1px;height:17px;background:#ffffff"></div>
<div class="a" style="left:284px;top:527px;width:1px;height:17px;background:#b0b0b0"></div>
<div class="a" style="left:377px;top:527px;width:1px;height:17px;background:#7a7a7a"></div>
<div class="a" style="left:378px;top:527px;width:1px;height:17px;background:#ffffff"></div>
<div class="a" style="left:376px;top:527px;width:1px;height:17px;background:#b0b0b0"></div>
<div class="a" style="left:469px;top:527px;width:1px;height:17px;background:#7a7a7a"></div>
<div class="a" style="left:470px;top:527px;width:1px;height:17px;background:#ffffff"></div>
<div class="a" style="left:468px;top:527px;width:1px;height:17px;background:#b0b0b0"></div>
<div class="a" style="left:561px;top:527px;width:1px;height:17px;background:#7a7a7a"></div>
<div class="a" style="left:562px;top:527px;width:1px;height:17px;background:#ffffff"></div>
<div class="a" style="left:560px;top:527px;width:1px;height:17px;background:#b0b0b0"></div>
<div class="a" style="left:653px;top:527px;width:1px;height:17px;background:#7a7a7a"></div>
<div class="a" style="left:654px;top:527px;width:1px;height:17px;background:#ffffff"></div>
<div class="a" style="left:652px;top:527px;width:1px;height:17px;background:#b0b0b0"></div>
<div class="a" style="left:745px;top:527px;width:1px;height:17px;background:#7a7a7a"></div>
<div class="a" style="left:746px;top:527px;width:1px;height:17px;background:#ffffff"></div>
<div class="a" style="left:744px;top:527px;width:1px;height:17px;background:#b0b0b0"></div>
<div class="a" style="left:9px;top:526px;width:1px;height:20px;background:#ffffff"></div>
<div class="a" style="left:9px;top:526px;width:93px;height:1px;background:#ffffff"></div>
<div class="t" style="left:12px;top:527.8px;font-size:11px;color:#000;letter-spacing:-0.13px">Ch1-1</div>
<div class="t" style="left:107.5px;top:527.8px;font-size:11px;color:#000;letter-spacing:-0.13px">Ch1-2</div>
<div class="t" style="left:199.5px;top:527.8px;font-size:11px;color:#a3a3a3;letter-spacing:-0.13px">Ch2-1</div>
<div class="t" style="left:291.5px;top:527.8px;font-size:11px;color:#a3a3a3;letter-spacing:-0.13px">Ch2-2</div>
<div class="t" style="left:383.5px;top:527.8px;font-size:11px;color:#a3a3a3;letter-spacing:-0.13px">Ch3-1</div>
<div class="t" style="left:475.5px;top:527.8px;font-size:11px;color:#a3a3a3;letter-spacing:-0.13px">Ch3-2</div>
<div class="t" style="left:567.5px;top:527.8px;font-size:11px;color:#a3a3a3;letter-spacing:-0.13px">Ch4-1</div>
<div class="t" style="left:659.5px;top:527.8px;font-size:11px;color:#a3a3a3;letter-spacing:-0.13px">Ch4-2</div>
<div class="a" style="left:9px;top:545px;width:1px;height:278px;background:#ffffff"></div>
<div class="a" style="left:9px;top:823px;width:1023px;height:1px;background:#ffffff"></div>
<div class="a" style="left:13px;top:549px;width:1016px;height:272px;background:#f0f0f0"></div>
<div class="a" style="left:13px;top:549px;width:1016px;height:2px;background:#696969"></div>
<div class="a" style="left:13px;top:549px;width:2px;height:272px;background:#696969"></div>
<div class="a" style="left:13px;top:821px;width:1017px;height:1px;background:#ffffff"></div>
<div class="a" style="left:1029px;top:549px;width:1px;height:273px;background:#ffffff"></div>
<div class="a" style="left:15px;top:551px;width:1009px;height:13px;background:#f0f0f0"></div>
<div class="a" style="left:15px;top:564px;width:1010px;height:1px;background:#000000"></div>
<div class="a" style="left:130px;top:551px;width:1px;height:14px;background:#000000"></div>
<div class="a" style="left:153px;top:551px;width:1px;height:14px;background:#000000"></div>
<div class="a" style="left:202px;top:551px;width:1px;height:14px;background:#000000"></div>
<div class="a" style="left:221px;top:551px;width:1px;height:14px;background:#000000"></div>
<div class="a" style="left:312px;top:551px;width:1px;height:14px;background:#000000"></div>
<div class="a" style="left:343px;top:551px;width:1px;height:14px;background:#000000"></div>
<div class="a" style="left:434px;top:551px;width:1px;height:14px;background:#000000"></div>
<div class="a" style="left:475px;top:551px;width:1px;height:14px;background:#000000"></div>
<div class="a" style="left:540px;top:551px;width:1px;height:14px;background:#000000"></div>
<div class="a" style="left:563px;top:551px;width:1px;height:14px;background:#000000"></div>
<div class="a" style="left:586px;top:551px;width:1px;height:14px;background:#000000"></div>
<div class="a" style="left:609px;top:551px;width:1px;height:14px;background:#000000"></div>
<div class="a" style="left:632px;top:551px;width:1px;height:14px;background:#000000"></div>
<div class="a" style="left:655px;top:551px;width:1px;height:14px;background:#000000"></div>
<div class="a" style="left:678px;top:551px;width:1px;height:14px;background:#000000"></div>
<div class="a" style="left:701px;top:551px;width:1px;height:14px;background:#000000"></div>
<div class="a" style="left:724px;top:551px;width:1px;height:14px;background:#000000"></div>
<div class="a" style="left:747px;top:551px;width:1px;height:14px;background:#000000"></div>
<div class="a" style="left:770px;top:551px;width:1px;height:14px;background:#000000"></div>
<div class="a" style="left:793px;top:551px;width:1px;height:14px;background:#000000"></div>
<div class="a" style="left:816px;top:551px;width:1px;height:14px;background:#000000"></div>
<div class="a" style="left:839px;top:551px;width:1px;height:14px;background:#000000"></div>
<div class="a" style="left:862px;top:551px;width:1px;height:14px;background:#000000"></div>
<div class="a" style="left:885px;top:551px;width:1px;height:14px;background:#000000"></div>
<div class="a" style="left:908px;top:551px;width:1px;height:14px;background:#000000"></div>
<div class="a" style="left:931px;top:551px;width:1px;height:14px;background:#000000"></div>
<div class="a" style="left:954px;top:551px;width:1px;height:14px;background:#000000"></div>
<div class="a" style="left:977px;top:551px;width:1px;height:14px;background:#000000"></div>
<div class="a" style="left:1000px;top:551px;width:1px;height:14px;background:#000000"></div>
<div class="a" style="left:1024px;top:551px;width:1px;height:14px;background:#000000"></div>
<div class="t" style="left:15.6px;top:549.5px;font-size:11px;;letter-spacing:-0.32px">Time</div>
<div class="t" style="left:132.5px;top:549.5px;font-size:11px;;letter-spacing:-0.32px">Ch</div>
<div class="t" style="left:155.5px;top:549.5px;font-size:11px;;letter-spacing:-0.32px">Protocol</div>
<div class="t" style="left:204.5px;top:549.5px;font-size:11px;;letter-spacing:-0.32px">Dir</div>
<div class="t" style="left:223.5px;top:549.5px;font-size:11px;;letter-spacing:-0.32px">Label</div>
<div class="t" style="left:314.5px;top:549.5px;font-size:11px;;letter-spacing:-0.32px">State</div>
<div class="t" style="left:345.5px;top:549.5px;font-size:11px;;letter-spacing:-0.32px">Type</div>
<div class="t" style="left:436.5px;top:549.5px;font-size:11px;;letter-spacing:-0.32px">Format</div>
<div class="t" style="left:477.5px;top:549.5px;font-size:11px;;letter-spacing:-0.32px">ID</div>
<div class="t" style="left:542.5px;top:549.5px;font-size:11px;letter-spacing:-0.6px">DLC</div>
<div class="t" style="left:565.5px;top:549.5px;font-size:11px;;letter-spacing:-0.16px">D1</div>
<div class="t" style="left:588.5px;top:549.5px;font-size:11px;;letter-spacing:-0.16px">D2</div>
<div class="t" style="left:611.5px;top:549.5px;font-size:11px;;letter-spacing:-0.16px">D3</div>
<div class="t" style="left:634.5px;top:549.5px;font-size:11px;;letter-spacing:-0.16px">D4</div>
<div class="t" style="left:657.5px;top:549.5px;font-size:11px;;letter-spacing:-0.16px">D5</div>
<div class="t" style="left:680.5px;top:549.5px;font-size:11px;;letter-spacing:-0.16px">D6</div>
<div class="t" style="left:703.5px;top:549.5px;font-size:11px;;letter-spacing:-0.16px">D7</div>
<div class="t" style="left:726.5px;top:549.5px;font-size:11px;;letter-spacing:-0.16px">D8</div>
<div class="t" style="left:749.5px;top:549.5px;font-size:11px;;letter-spacing:-0.32px">CS</div>
<div class="t" style="left:772.5px;top:549.5px;font-size:11px;"></div>
<div class="t" style="left:795.5px;top:549.5px;font-size:11px;"></div>
<div class="t" style="left:818.5px;top:549.5px;font-size:11px;"></div>
<div class="t" style="left:841.5px;top:549.5px;font-size:11px;"></div>
<div class="t" style="left:864.5px;top:549.5px;font-size:11px;"></div>
<div class="t" style="left:887.5px;top:549.5px;font-size:11px;"></div>
<div class="t" style="left:910.5px;top:549.5px;font-size:11px;"></div>
<div class="t" style="left:933.5px;top:549.5px;font-size:11px;"></div>
<div class="t" style="left:956.5px;top:549.5px;font-size:11px;"></div>
<div class="t" style="left:979.5px;top:549.5px;font-size:11px;"></div>
<div class="t" style="left:1002.5px;top:549.5px;font-size:11px;"></div>
<div class="a" style="left:15px;top:565px;width:1013px;height:240px;background:#ffffff"></div>
<div class="a" style="left:31px;top:812px;width:17px;height:2px;background:#7a7a7a"></div>
<div class="a" style="left:15px;top:565px;width:1013px;height:14px;background:#0078d7"></div>
<div class="t" style="left:16.7px;top:564.5px;font-size:11px;color:#fff;letter-spacing:0.15px">+000:00:30.500.819</div>
<div class="t" style="left:133.9px;top:564.5px;font-size:11px;color:#fff">1-1</div>
<div class="t" style="left:155.8px;top:564.5px;font-size:11px;color:#fff;letter-spacing:-0.32px">LIN</div>
<div class="t" style="left:204.5px;top:564.5px;font-size:11px;color:#fff;letter-spacing:-0.32px">T</div>
<div class="t" style="left:314.8px;top:564.5px;font-size:11px;color:#fff;letter-spacing:-0.32px">OK</div>
<div class="t" style="left:345.4px;top:564.5px;font-size:11px;color:#fff;letter-spacing:-0.32px">Header</div>
<div class="t" style="left:437.4px;top:564.5px;font-size:11px;color:#fff;letter-spacing:-0.19px">13bit</div>
<div class="t" style="left:477.3px;top:564.5px;font-size:11px;color:#fff">03</div>
<div class="t" style="left:542.9px;top:564.5px;font-size:11px;color:#fff">-</div>
<div class="t" style="left:16.7px;top:579.5px;font-size:11px;color:#000;letter-spacing:0.15px">+000:00:30.502.557</div>
<div class="t" style="left:133.9px;top:579.5px;font-size:11px;color:#000">1-1</div>
<div class="t" style="left:155.8px;top:579.5px;font-size:11px;color:#000;letter-spacing:-0.32px">LIN</div>
<div class="t" style="left:204.5px;top:579.5px;font-size:11px;color:#000;letter-spacing:-0.32px">R</div>
<div class="t" style="left:314.8px;top:579.5px;font-size:11px;color:#000;letter-spacing:-0.32px">OK</div>
<div class="t" style="left:345.4px;top:579.5px;font-size:11px;color:#000;letter-spacing:-0.32px">Response</div>
<div class="t" style="left:437.4px;top:579.5px;font-size:11px;color:#000">-</div>
<div class="t" style="left:477.3px;top:579.5px;font-size:11px;color:#000">03</div>
<div class="t" style="left:542.9px;top:579.5px;font-size:11px;color:#000">2</div>
<div class="t" style="left:565.6px;top:579.5px;font-size:11px;color:#000;letter-spacing:-0.16px">4A</div>
<div class="t" style="left:588.6px;top:579.5px;font-size:11px;color:#000;letter-spacing:-0.16px">C6</div>
<div class="t" style="left:749.2px;top:579.5px;font-size:11px;color:#000;letter-spacing:-0.32px">EE</div>
<div class="t" style="left:16.7px;top:594.5px;font-size:11px;color:#000;letter-spacing:0.15px">+000:00:31.000.818</div>
<div class="t" style="left:133.9px;top:594.5px;font-size:11px;color:#000">1-1</div>
<div class="t" style="left:155.8px;top:594.5px;font-size:11px;color:#000;letter-spacing:-0.32px">LIN</div>
<div class="t" style="left:204.5px;top:594.5px;font-size:11px;color:#000;letter-spacing:-0.32px">T</div>
<div class="t" style="left:314.8px;top:594.5px;font-size:11px;color:#000;letter-spacing:-0.32px">OK</div>
<div class="t" style="left:345.4px;top:594.5px;font-size:11px;color:#000;letter-spacing:-0.32px">Header</div>
<div class="t" style="left:437.4px;top:594.5px;font-size:11px;color:#000;letter-spacing:-0.19px">13bit</div>
<div class="t" style="left:477.3px;top:594.5px;font-size:11px;color:#000">15</div>
<div class="t" style="left:542.9px;top:594.5px;font-size:11px;color:#000">-</div>
<div class="t" style="left:16.7px;top:609.5px;font-size:11px;color:#000;letter-spacing:0.15px">+000:00:31.002.589</div>
<div class="t" style="left:133.9px;top:609.5px;font-size:11px;color:#000">1-1</div>
<div class="t" style="left:155.8px;top:609.5px;font-size:11px;color:#000;letter-spacing:-0.32px">LIN</div>
<div class="t" style="left:204.5px;top:609.5px;font-size:11px;color:#000;letter-spacing:-0.32px">T</div>
<div class="t" style="left:314.8px;top:609.5px;font-size:11px;color:#000;letter-spacing:-0.32px">OK</div>
<div class="t" style="left:345.4px;top:609.5px;font-size:11px;color:#000;letter-spacing:-0.32px">Response</div>
<div class="t" style="left:437.4px;top:609.5px;font-size:11px;color:#000">-</div>
<div class="t" style="left:477.3px;top:609.5px;font-size:11px;color:#000">15</div>
<div class="t" style="left:542.9px;top:609.5px;font-size:11px;color:#000">2</div>
<div class="t" style="left:565.6px;top:609.5px;font-size:11px;color:#000;letter-spacing:-0.32px">FF</div>
<div class="t" style="left:588.6px;top:609.5px;font-size:11px;color:#000;letter-spacing:-0.16px">F0</div>
<div class="t" style="left:749.2px;top:609.5px;font-size:11px;color:#000;letter-spacing:-0.16px">0F</div>
<div class="t" style="left:16.7px;top:624.5px;font-size:11px;color:#000;letter-spacing:0.15px">+000:00:30.000.816</div>
<div class="t" style="left:133.9px;top:624.5px;font-size:11px;color:#000">1-1</div>
<div class="t" style="left:155.8px;top:624.5px;font-size:11px;color:#000;letter-spacing:-0.32px">LIN</div>
<div class="t" style="left:204.5px;top:624.5px;font-size:11px;color:#000;letter-spacing:-0.32px">T</div>
<div class="t" style="left:314.8px;top:624.5px;font-size:11px;color:#000;letter-spacing:-0.32px">OK</div>
<div class="t" style="left:345.4px;top:624.5px;font-size:11px;color:#000;letter-spacing:-0.32px">Header</div>
<div class="t" style="left:437.4px;top:624.5px;font-size:11px;color:#000;letter-spacing:-0.19px">13bit</div>
<div class="t" style="left:477.3px;top:624.5px;font-size:11px;color:#000;letter-spacing:-0.16px">2D</div>
<div class="t" style="left:542.9px;top:624.5px;font-size:11px;color:#000">-</div>
<div class="t" style="left:16.7px;top:639.5px;font-size:11px;color:#000;letter-spacing:0.15px">+000:00:30.003.703</div>
<div class="t" style="left:133.9px;top:639.5px;font-size:11px;color:#000">1-1</div>
<div class="t" style="left:155.8px;top:639.5px;font-size:11px;color:#000;letter-spacing:-0.32px">LIN</div>
<div class="t" style="left:204.5px;top:639.5px;font-size:11px;color:#000;letter-spacing:-0.32px">R</div>
<div class="t" style="left:314.8px;top:639.5px;font-size:11px;color:#000;letter-spacing:-0.32px">OK</div>
<div class="t" style="left:345.4px;top:639.5px;font-size:11px;color:#000;letter-spacing:-0.32px">Response</div>
<div class="t" style="left:437.4px;top:639.5px;font-size:11px;color:#000">-</div>
<div class="t" style="left:477.3px;top:639.5px;font-size:11px;color:#000;letter-spacing:-0.16px">2D</div>
<div class="t" style="left:542.9px;top:639.5px;font-size:11px;color:#000">4</div>
<div class="t" style="left:565.6px;top:639.5px;font-size:11px;color:#000">14</div>
<div class="t" style="left:588.6px;top:639.5px;font-size:11px;color:#000">58</div>
<div class="t" style="left:611.6px;top:639.5px;font-size:11px;color:#000;letter-spacing:-0.16px">9C</div>
<div class="t" style="left:634.6px;top:639.5px;font-size:11px;color:#000;letter-spacing:-0.16px">D0</div>
<div class="t" style="left:749.2px;top:639.5px;font-size:11px;color:#000">26</div>
<div class="a" style="left:1041px;top:0px;width:416px;height:290px;border:1px solid #16191d;border-radius:6px 6px 0 0;background:#c0d3e8;overflow:hidden"><div class="a" style="left:0;top:1px;width:100%;height:29px;background:linear-gradient(#94abc8 0px,#9bb5cc 3px,#a2b9d7 13px,#adcbe6 23px,#bacce8 28px,#bfd0dc 29px)"></div><div class="a" style="left:0;top:0;width:414px;height:288px;border:1px solid #a8dcfa;border-top-color:#ffffff;border-radius:5px 5px 0 0"></div></div>
<div class="a" style="left:1051px;top:10px"><svg width="17" height="17" viewBox="0 0 17 17"><path d="M0.7 2.7 C2 1.6 4 0.9 6 0.9 L10.2 0.9 C12 1.1 14 1.7 15.6 2.4 C14 3.2 12.8 3.8 11.8 4.6 C12.6 6.5 13.6 9.5 13.9 12.8 C13.2 12 12.5 11.2 11.8 10.6 C11 12.2 10 14.2 8.6 16.6 L5.6 16.4 C6.6 12.6 7.6 9 7.4 6.2 C5.5 5.2 3.5 4.4 0.7 2.7 Z" fill="#cc2229"/><path d="M2.5 2.6 C5 1.8 9 1.6 13 2.4" stroke="#e8454c" stroke-width="0.9" fill="none"/><path d="M9.2 6 C10 9 9.5 12 7.5 15.5" stroke="#a8141c" stroke-width="0.8" fill="none"/></svg></div>
<div class="t" style="left:1071px;top:13.0px;font-size:12px;color:#000;letter-spacing:-0.1px">Label Filter Window</div>
<div class="a" style="left:1349px;top:10px;width:30px;height:16px;border:1px solid #5d6e84;border-radius:2px;background:linear-gradient(#d2e2f3,#c0d5ec 48%,#a8bfdb 52%,#b9d0ea);box-shadow:inset 0 0 0 1px rgba(255,255,255,0.35)"></div>
<div class="a" style="left:1359px;top:18.5px;width:9px;height:2.5px;border:1px solid #3f4a58;background:#fff;border-radius:1px"></div>
<div class="a" style="left:1383px;top:10px;width:30px;height:16px;border:1px solid #5d6e84;border-radius:2px;background:linear-gradient(#d2e2f3,#c0d5ec 48%,#a8bfdb 52%,#b9d0ea);box-shadow:inset 0 0 0 1px rgba(255,255,255,0.35)"></div>
<div class="a" style="left:1393px;top:14px;width:9px;height:7px;border:1px solid #3f4a58;background:#fff;border-radius:1px"></div>
<div class="a" style="left:1395px;top:16px;width:4px;height:2px;border:1px solid #3f4a58;background:#dfe6ee"></div>
<div class="a" style="left:1417px;top:10px;width:30px;height:16px;border:1px solid #4a1c1c;border-radius:2px;background:linear-gradient(#eeb0a2,#e39884 48%,#c9492f 52%,#d2603f);box-shadow:inset 0 0 0 1px rgba(255,255,255,0.35)"></div>
<svg class="a" style="left:1426px;top:14px" width="12" height="10" viewBox="0 0 12 10"><path d="M3 2.6 L9 7.6 M9 2.6 L3 7.6" stroke="#3c4550" stroke-width="4.2" stroke-linecap="round"/><path d="M3 2.6 L9 7.6 M9 2.6 L3 7.6" stroke="#fff" stroke-width="2.5" stroke-linecap="round"/></svg>
<div class="a" style="left:1049px;top:31px;width:403px;height:253px;background:#f0f0f0"></div>
<div class="a" style="left:1049px;top:31px;width:403px;height:1px;background:#eef3f8"></div>
<div class="a" style="left:1448px;top:32px;width:1px;height:252px;background:#f2f2f8"></div>
<div class="a" style="left:1449px;top:32px;width:1px;height:252px;background:#eef0f8"></div>
<div class="a" style="left:1450px;top:32px;width:1px;height:252px;background:#e8eef8"></div>
<div class="t" style="left:1056px;top:34.0px;font-size:11px;letter-spacing:-0.1px">Filter List(Priority Order)</div>
<div class="a" style="left:1367px;top:34px;width:70px;height:21px;background:#f0f0f0;border:1px solid;border-color:#fff #696969 #696969 #fff;box-shadow:inset -1px -1px 0 #a0a0a0"></div>
<div class="t" style="left:1390px;top:38.0px;font-size:11px;letter-spacing:-0.3px">Clear</div>
<div class="a" style="left:1056px;top:51px;width:139px;height:189px;border:1px solid;border-color:#828790 #fff #fff #828790;background:#fff;box-shadow:inset 1px 1px 0 #b0b0b0"></div>
<div class="a" style="left:1060px;top:54px;width:9px;height:9px;border:1px solid #8e8f8f;background:#fff"></div>
<div class="a" style="left:1073px;top:53px;width:121px;height:11px;background:#0a70d8;border:1px dotted #1b1b1b"></div>
<div class="t" style="left:1074.3px;top:53.0px;font-size:11px;color:#c7f0ff;letter-spacing:-0.15px">Response_03</div>
<div class="a" style="left:1210px;top:75px;width:29px;height:39px;background:#f0f0f0;border:1px solid;border-color:#fff #696969 #696969 #fff;box-shadow:inset -1px -1px 0 #a0a0a0"></div>
<svg class="a" style="left:1218px;top:87px" width="16" height="16" viewBox="0 0 16 16"><path d="M8 1.5 L14.2 8 H11 V15.5 H5 V8 H1.8 Z" fill="#000"/></svg>
<div class="a" style="left:1210px;top:152px;width:29px;height:39px;background:#f0f0f0;border:1px solid;border-color:#fff #696969 #696969 #fff;box-shadow:inset -1px -1px 0 #a0a0a0"></div>
<svg class="a" style="left:1218px;top:164px" width="16" height="16" viewBox="0 0 16 16"><path d="M8 15 L14.2 8.3 H11 V1.8 H5 V8.3 H1.8 Z" fill="#000"/></svg>
<div class="a" style="left:1057px;top:249px;width:30px;height:26px;background:#f0f0f0;border:1px solid;border-color:#fff #696969 #696969 #fff;box-shadow:inset -1px -1px 0 #a0a0a0"></div>
<svg class="a" style="left:1065px;top:255px" width="16" height="16" viewBox="0 0 16 16"><path d="M6.5 1.5 H9.5 V6.5 H14.5 V9.5 H9.5 V14.5 H6.5 V9.5 H1.5 V6.5 H6.5 Z" fill="#e00000"/></svg>
<div class="a" style="left:1111px;top:249px;width:30px;height:26px;background:#f0f0f0;border:1px solid;border-color:#fff #696969 #696969 #fff;box-shadow:inset -1px -1px 0 #a0a0a0"></div>
<svg class="a" style="left:1118px;top:255px" width="18" height="17" viewBox="0 0 18 17"><path d="M1.5 1 H8.5 V2.5 L6.5 4.5 V8.5 H3.5 V4.5 L1.5 2.5 Z" fill="#fff" stroke="#111" stroke-width="1.1"/><path d="M3 2.2 H7 L5.8 3.6 H4.2 Z" fill="#333"/><path d="M9 8 H16 V9.5 L14 11.5 V15.5 H11 V11.5 L9 9.5 Z" fill="#fff" stroke="#111" stroke-width="1.1"/><path d="M10.5 9.2 H14.5 L13.3 10.6 H11.7 Z" fill="#333"/><path d="M4.5 10 V13.5 H8" fill="none" stroke="#111" stroke-width="1.1"/><path d="M6.8 11.8 L8.5 13.5 L6.8 15.2" fill="none" stroke="#111" stroke-width="1.1"/></svg>
<div class="a" style="left:1165px;top:249px;width:30px;height:26px;background:#f0f0f0;border:1px solid;border-color:#fff #696969 #696969 #fff;box-shadow:inset -1px -1px 0 #a0a0a0"></div>
<svg class="a" style="left:1172px;top:255px" width="18" height="17" viewBox="0 0 18 17"><rect x="2.5" y="2" width="13" height="3" rx="1" fill="#111"/><rect x="7" y="0.5" width="4" height="2" fill="#111"/><path d="M3.5 5 H14.5 L14 15.5 H4 Z" fill="#111"/><path d="M5.8 6 V15 M8 6 V15 M10.2 6 V15 M12.4 6 V15" stroke="#8a8a8a" stroke-width="0.9"/></svg>
<div class="a" style="left:1248px;top:67px;width:188px;height:207px;border:1px solid #a0a0a0;box-shadow:1px 1px 0 #fff, inset 1px 1px 0 #fff"></div>
<div class="t" style="left:1253.5px;top:61.5px;padding:0 1px;background:#f0f0f0;letter-spacing:-0.1px">Filter Setting</div>
<div class="t" style="left:1262.5px;top:78.5px;font-size:11px;letter-spacing:-0.1px">Label</div>
<div class="a" style="left:1264px;top:98px;width:127px;height:21px;background:#ff0000"></div>
<div class="t" style="left:1267.5px;top:101.5px;font-size:11px;color:#ffc800;letter-spacing:-0.1px">Response_03</div>
<div class="a" style="left:1393px;top:98px;width:28px;height:20px;background:#f0f0f0;border:1px solid;border-color:#fff #696969 #696969 #fff;box-shadow:inset -1px -1px 0 #a0a0a0"></div>
<svg class="a" style="left:1393px;top:98px" width="30" height="22" viewBox="0 0 30 22"><polygon points="9,12.6 19,2.9 23.1,6.4 13.1,15.8" fill="#1a6f1a" stroke="#0b3f0b" stroke-width="0.7"/><polygon points="9,12.6 13.1,15.8 8,17.6" fill="#eadbb8"/><circle cx="8.3" cy="17" r="1.2" fill="#000"/></svg>
<div class="a" style="left:1263px;top:130px;width:153px;height:111px;border:2px solid;border-color:#858585 #c8c8c8 #c8c8c8 #858585;background:#fff"></div>
<div class="a" style="left:1265px;top:132px;width:41px;height:13px;background:#f0f0f0"></div>
<div class="a" style="left:1382px;top:132px;width:18px;height:13px;background:#f0f0f0"></div>
<div class="a" style="left:1265px;top:145px;width:153px;height:1px;background:#c8c8c8"></div>
<div class="t" style="left:1266px;top:131.5px;font-size:11px;letter-spacing:-0.3px">Ch</div>
<div class="t" style="left:1308px;top:131.5px;font-size:11px;letter-spacing:-0.2px">ALL</div>
<div class="t" style="left:1383px;top:131.5px;font-size:11px;;letter-spacing:-0.16px">D1</div>
<svg class="a" style="left:1403px;top:134px" width="13" height="6" viewBox="0 0 13 6"><g stroke="#2a2a2a" stroke-width="1.1"><path d="M0.4 2.7 H5.2 M1 0.8 L4.6 4.6 M4.6 0.8 L1 4.6"/><path d="M6.6 2.7 H11.4 M7.2 0.8 L10.8 4.6 M10.8 0.8 L7.2 4.6"/></g></svg>
<div class="a" style="left:1265px;top:146px;width:41px;height:13px;background:#f0f0f0"></div>
<div class="a" style="left:1382px;top:146px;width:18px;height:13px;background:#f0f0f0"></div>
<div class="a" style="left:1265px;top:159px;width:153px;height:1px;background:#c8c8c8"></div>
<div class="t" style="left:1266px;top:145.5px;font-size:11px;letter-spacing:-0.3px">Protocol</div>
<div class="t" style="left:1308px;top:145.5px;font-size:11px;letter-spacing:-0.2px">LIN</div>
<div class="t" style="left:1383px;top:145.5px;font-size:11px;;letter-spacing:-0.16px">D2</div>
<svg class="a" style="left:1403px;top:148px" width="13" height="6" viewBox="0 0 13 6"><g stroke="#2a2a2a" stroke-width="1.1"><path d="M0.4 2.7 H5.2 M1 0.8 L4.6 4.6 M4.6 0.8 L1 4.6"/><path d="M6.6 2.7 H11.4 M7.2 0.8 L10.8 4.6 M10.8 0.8 L7.2 4.6"/></g></svg>
<div class="a" style="left:1265px;top:160px;width:41px;height:13px;background:#f0f0f0"></div>
<div class="a" style="left:1382px;top:160px;width:18px;height:13px;background:#f0f0f0"></div>
<div class="a" style="left:1265px;top:173px;width:153px;height:1px;background:#c8c8c8"></div>
<div class="t" style="left:1266px;top:159.5px;font-size:11px;letter-spacing:-0.3px">Dir</div>
<div class="t" style="left:1308px;top:159.5px;font-size:11px;letter-spacing:-0.2px">R</div>
<div class="t" style="left:1383px;top:159.5px;font-size:11px;;letter-spacing:-0.16px">D3</div>
<svg class="a" style="left:1403px;top:162px" width="13" height="6" viewBox="0 0 13 6"><g stroke="#2a2a2a" stroke-width="1.1"><path d="M0.4 2.7 H5.2 M1 0.8 L4.6 4.6 M4.6 0.8 L1 4.6"/><path d="M6.6 2.7 H11.4 M7.2 0.8 L10.8 4.6 M10.8 0.8 L7.2 4.6"/></g></svg>
<div class="a" style="left:1265px;top:174px;width:41px;height:13px;background:#f0f0f0"></div>
<div class="a" style="left:1382px;top:174px;width:18px;height:13px;background:#f0f0f0"></div>
<div class="a" style="left:1265px;top:187px;width:153px;height:1px;background:#c8c8c8"></div>
<div class="t" style="left:1266px;top:173.5px;font-size:11px;letter-spacing:-0.3px">State</div>
<div class="t" style="left:1308px;top:173.5px;font-size:11px;letter-spacing:-0.2px">OK</div>
<div class="t" style="left:1383px;top:173.5px;font-size:11px;;letter-spacing:-0.16px">D4</div>
<svg class="a" style="left:1403px;top:176px" width="13" height="6" viewBox="0 0 13 6"><g stroke="#2a2a2a" stroke-width="1.1"><path d="M0.4 2.7 H5.2 M1 0.8 L4.6 4.6 M4.6 0.8 L1 4.6"/><path d="M6.6 2.7 H11.4 M7.2 0.8 L10.8 4.6 M10.8 0.8 L7.2 4.6"/></g></svg>
<div class="a" style="left:1265px;top:188px;width:41px;height:13px;background:#f0f0f0"></div>
<div class="a" style="left:1382px;top:188px;width:18px;height:13px;background:#f0f0f0"></div>
<div class="a" style="left:1265px;top:201px;width:153px;height:1px;background:#c8c8c8"></div>
<div class="t" style="left:1266px;top:187.5px;font-size:11px;letter-spacing:-0.3px">Type</div>
<div class="t" style="left:1308px;top:187.5px;font-size:11px;letter-spacing:-0.2px">Res/Frm</div>
<div class="t" style="left:1383px;top:187.5px;font-size:11px;;letter-spacing:-0.16px">D5</div>
<svg class="a" style="left:1403px;top:190px" width="13" height="6" viewBox="0 0 13 6"><g stroke="#2a2a2a" stroke-width="1.1"><path d="M0.4 2.7 H5.2 M1 0.8 L4.6 4.6 M4.6 0.8 L1 4.6"/><path d="M6.6 2.7 H11.4 M7.2 0.8 L10.8 4.6 M10.8 0.8 L7.2 4.6"/></g></svg>
<div class="a" style="left:1265px;top:202px;width:41px;height:13px;background:#f0f0f0"></div>
<div class="a" style="left:1382px;top:202px;width:18px;height:13px;background:#f0f0f0"></div>
<div class="a" style="left:1265px;top:215px;width:153px;height:1px;background:#c8c8c8"></div>
<div class="t" style="left:1266px;top:201.5px;font-size:11px;letter-spacing:-0.3px">Format</div>
<div class="t" style="left:1308px;top:201.5px;font-size:11px;letter-spacing:-0.2px">-</div>
<div class="t" style="left:1383px;top:201.5px;font-size:11px;;letter-spacing:-0.16px">D6</div>
<svg class="a" style="left:1403px;top:204px" width="13" height="6" viewBox="0 0 13 6"><g stroke="#2a2a2a" stroke-width="1.1"><path d="M0.4 2.7 H5.2 M1 0.8 L4.6 4.6 M4.6 0.8 L1 4.6"/><path d="M6.6 2.7 H11.4 M7.2 0.8 L10.8 4.6 M10.8 0.8 L7.2 4.6"/></g></svg>
<div class="a" style="left:1265px;top:216px;width:41px;height:13px;background:#f0f0f0"></div>
<div class="a" style="left:1382px;top:216px;width:18px;height:13px;background:#f0f0f0"></div>
<div class="a" style="left:1265px;top:229px;width:153px;height:1px;background:#c8c8c8"></div>
<div class="t" style="left:1266px;top:215.5px;font-size:11px;letter-spacing:-0.3px">ID</div>
<div class="t" style="left:1308px;top:215.5px;font-size:11px;letter-spacing:-0.2px">03</div>
<div class="t" style="left:1383px;top:215.5px;font-size:11px;;letter-spacing:-0.16px">D7</div>
<svg class="a" style="left:1403px;top:218px" width="13" height="6" viewBox="0 0 13 6"><g stroke="#2a2a2a" stroke-width="1.1"><path d="M0.4 2.7 H5.2 M1 0.8 L4.6 4.6 M4.6 0.8 L1 4.6"/><path d="M6.6 2.7 H11.4 M7.2 0.8 L10.8 4.6 M10.8 0.8 L7.2 4.6"/></g></svg>
<div class="a" style="left:1265px;top:230px;width:41px;height:13px;background:#f0f0f0"></div>
<div class="a" style="left:1382px;top:230px;width:18px;height:13px;background:#f0f0f0"></div>
<div class="a" style="left:1265px;top:243px;width:153px;height:1px;background:#c8c8c8"></div>
<div class="t" style="left:1266px;top:229.5px;font-size:11px;letter-spacing:-0.3px">DL</div>
<div class="t" style="left:1308px;top:229.5px;font-size:11px;letter-spacing:-0.2px">*</div>
<div class="t" style="left:1383px;top:229.5px;font-size:11px;;letter-spacing:-0.16px">D8</div>
<svg class="a" style="left:1403px;top:232px" width="13" height="6" viewBox="0 0 13 6"><g stroke="#2a2a2a" stroke-width="1.1"><path d="M0.4 2.7 H5.2 M1 0.8 L4.6 4.6 M4.6 0.8 L1 4.6"/><path d="M6.6 2.7 H11.4 M7.2 0.8 L10.8 4.6 M10.8 0.8 L7.2 4.6"/></g></svg>
<div class="a" style="left:1306px;top:132px;width:1px;height:111px;background:#c8c8c8"></div>
<div class="a" style="left:1381px;top:132px;width:1px;height:111px;background:#c8c8c8"></div>
<div class="a" style="left:1400px;top:132px;width:1px;height:111px;background:#c8c8c8"></div>
<div class="a" style="left:1262px;top:246px;width:50px;height:16px;background:#f0f0f0;border:1px solid;border-color:#fff #696969 #696969 #fff;box-shadow:inset -1px -1px 0 #a0a0a0"></div>
<svg class="a" style="left:1277px;top:250px" width="22" height="10" viewBox="0 0 22 10"><path d="M1 3.8 H5 L8.5 2 H17 V1 H21 V8.5 H17 V7.6 H8.5 L5 5.8 H1 Z" fill="#a4a4a4"/></svg>
<div class="a" style="left:1316px;top:246px;width:50px;height:16px;background:#f0f0f0;border:1px solid;border-color:#fff #696969 #696969 #fff;box-shadow:inset -1px -1px 0 #a0a0a0"></div>
<svg class="a" style="left:1329px;top:245px" width="24" height="18" viewBox="0 0 30 22"><polygon points="9,12.6 19,2.9 23.1,6.4 13.1,15.8" fill="#1a6f1a" stroke="#0b3f0b" stroke-width="0.7"/><polygon points="9,12.6 13.1,15.8 8,17.6" fill="#eadbb8"/><circle cx="8.3" cy="17" r="1.2" fill="#000"/></svg>
<div class="a" style="left:1370px;top:246px;width:50px;height:16px;background:#f0f0f0;border:1px solid;border-color:#fff #696969 #696969 #fff;box-shadow:inset -1px -1px 0 #a0a0a0"></div>
<svg class="a" style="left:1385px;top:250px" width="22" height="10" viewBox="0 0 22 10"><path d="M21 3.8 H16 L13 2 H5 V1 H0.5 V9 H5 V7.8 H13 L16 5.8 H21 Z" fill="#000"/></svg>
</body></html>
